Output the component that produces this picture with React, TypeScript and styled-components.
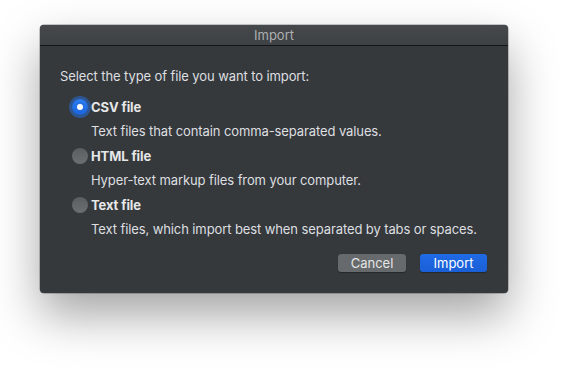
import React, { useState } from "react";
import styled, { createGlobalStyle, css } from "styled-components";

const Global = createGlobalStyle`
  html, body { margin: 0; padding: 0; background: #ffffff; }
  body { font-family: Inter, "Noto Sans", "Liberation Sans", sans-serif; }
`;

const Page = styled.div`
  width: 568px;
  height: 368px;
  padding: 25px 0 0 40px;
  box-sizing: border-box;
  overflow: hidden;
`;

const Dialog = styled.div`
  width: 468px;
  height: 268px;
  background: #35393c;
  border-radius: 4px;
  box-shadow: 0 22px 48px rgba(0, 0, 0, 0.36), 0 0 0 0.5px rgba(0, 0, 0, 0.4);
  display: flex;
  flex-direction: column;
  overflow: hidden;
`;

const TitleBar = styled.div`
  height: 20px;
  flex: none;
  background: linear-gradient(#45494c, #3d4144);
  border-bottom: 1px solid #141516;
  display: flex;
  align-items: center;
  justify-content: center;
  color: #adafb1;
  font-size: 13px;
`;

const Body = styled.div`
  flex: 1;
  display: flex;
  flex-direction: column;
  padding: 22px 21px 21px 20px;
  color: #dedfe0;
  font-size: 13px;
  letter-spacing: -0.1px;
`;

const Heading = styled.div`
  height: 16px;
  line-height: 16px;
`;

const Options = styled.div`
  display: flex;
  flex-direction: column;
  gap: 8px;
  margin: 14px 0 0 12px;
`;

const Option = styled.div`
  display: flex;
  flex-direction: column;
`;

const OptionRow = styled.label`
  display: flex;
  align-items: center;
  gap: 3px;
  height: 18px;
  cursor: default;
`;

const Radio = styled.span<{ $checked: boolean }>`
  width: 16px;
  height: 16px;
  border-radius: 50%;
  box-sizing: border-box;
  display: flex;
  align-items: center;
  justify-content: center;
  ${(p) =>
    p.$checked
      ? css`
          background: linear-gradient(#2c7cf0, #1b64dc);
          box-shadow: 0 0 0 3px rgba(38, 110, 215, 0.55);
          &::after {
            content: "";
            width: 6px;
            height: 6px;
            border-radius: 50%;
            background: #ffffff;
          }
        `
      : css`
          background: linear-gradient(#5b5e61, #6c6f72);
        `}
`;

const OptionLabel = styled.span`
  font-weight: 700;
  color: #e6e7e8;
  line-height: 18px;
`;

const Description = styled.div`
  margin: 7px 0 0 19px;
  height: 16px;
  line-height: 16px;
`;

const Buttons = styled.div`
  margin-top: auto;
  display: flex;
  justify-content: flex-end;
  gap: 14px;
`;

const Button = styled.button<{ $primary?: boolean }>`
  height: 18px;
  width: ${(p) => (p.$primary ? "67px" : "68px")};
  border: none;
  border-radius: 3px;
  padding: 0;
  font-family: inherit;
  font-size: 13px;
  line-height: 18px;
  color: ${(p) => (p.$primary ? "#ffffff" : "#e4e5e6")};
  background: ${(p) =>
    p.$primary ? "linear-gradient(#1f6be6, #1a5fd6)" : "#676a6d"};
  box-shadow: 0 0.5px 1px rgba(0, 0, 0, 0.3);
`;

const items = [
  { label: "CSV file", desc: "Text files that contain comma-separated values." },
  { label: "HTML file", desc: "Hyper-text markup files from your computer." },
  { label: "Text file", desc: "Text files, which import best when separated by tabs or spaces." },
];

export default function App() {
  const [sel, setSel] = useState(0);
  return (
    <>
      <Global />
      <Page>
        <Dialog>
          <TitleBar>Import</TitleBar>
          <Body>
            <Heading>Select the type of file you want to import:</Heading>
            <Options>
              {items.map((it, i) => (
                <Option key={it.label}>
                  <OptionRow onClick={() => setSel(i)}>
                    <Radio $checked={sel === i} />
                    <OptionLabel>{it.label}</OptionLabel>
                  </OptionRow>
                  <Description>{it.desc}</Description>
                </Option>
              ))}
            </Options>
            <Buttons>
              <Button>Cancel</Button>
              <Button $primary>Import</Button>
            </Buttons>
          </Body>
        </Dialog>
      </Page>
    </>
  );
}
